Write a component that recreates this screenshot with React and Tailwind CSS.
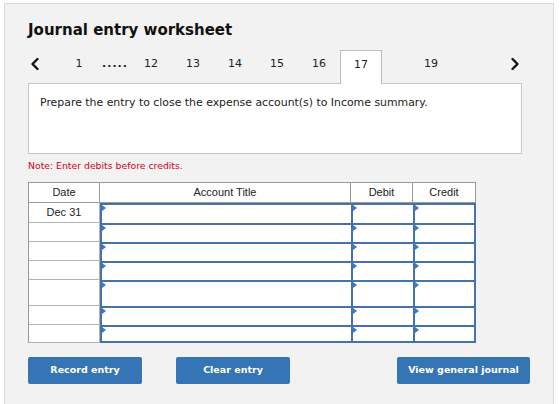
import React from "react";

const V = { fontFamily: '"DejaVu Sans", Verdana, sans-serif' };
const A = { fontFamily: '"Liberation Sans", Arial, sans-serif' };

function Chevron({ dir }) {
  return (
    <svg width="10" height="14" viewBox="0 0 10 14">
      <path
        d={dir === "left" ? "M7.5 2 L2.5 7 L7.5 12" : "M2.5 2 L7.5 7 L2.5 12"}
        fill="none"
        stroke="#111"
        strokeWidth="2.4"
        strokeLinecap="round"
        strokeLinejoin="round"
      />
    </svg>
  );
}

function InputCell({ last, bottom }) {
  return (
    <div
      className={
        "relative bg-white border-t-2 border-l-2 border-[#4572a8] " +
        (last ? "border-r-2 " : "") +
        (bottom ? "border-b-2" : "")
      }
    >
      <div className="absolute top-0 left-0 w-0 h-0 border-t-[3px] border-b-[3px] border-l-[4px] border-t-transparent border-b-transparent border-l-[#3a78c8]" />
    </div>
  );
}

const rows = [
  { h: "h-[20px]", date: "Dec 31" },
  { h: "h-[19px]", date: "" },
  { h: "h-[19px]", date: "" },
  { h: "h-[19px]", date: "" },
  { h: "h-[26px]", date: "" },
  { h: "h-[19px]", date: "" },
  { h: "h-[18px]", date: "" },
];

export default function App() {
  return (
    <div className="w-[560px] h-[404px] bg-white overflow-hidden">
      <div className="ml-[4px] mt-[3px] w-[550px] h-[420px] border border-[#d9d9d9] bg-[#f2f2f2] pl-[23px] pt-[16px]">
        <h1 className="text-[15px] font-bold text-[#111] leading-[20px]" style={V}>
          Journal entry worksheet
        </h1>
        <div className="mt-[10px] flex items-stretch h-[33px] text-[11px] text-[#222]" style={V}>
          <div className="w-[20px] flex items-center pl-[2px] pb-[6px]">
            <Chevron dir="left" />
          </div>
          <div className="w-[10px]" />
          <div className="w-[42px] flex items-center justify-center pb-[5px]">1</div>
          <div className="w-[30px] flex items-center justify-center font-bold tracking-[1px] pb-[5px]">.....</div>
          <div className="w-[42px] flex items-center justify-center pb-[5px]">12</div>
          <div className="w-[42px] flex items-center justify-center pb-[5px]">13</div>
          <div className="w-[42px] flex items-center justify-center pb-[5px]">14</div>
          <div className="w-[42px] flex items-center justify-center pb-[5px]">15</div>
          <div className="w-[42px] flex items-center justify-center pb-[5px]">16</div>
          <div className="w-[42px] flex items-center justify-center pb-[5px] bg-white border border-b-0 border-[#bdbdbd] relative z-10 -mb-px">
            17
          </div>
          <div className="w-[98px] flex items-center justify-center pb-[5px]">19</div>
          <div className="w-[40px] flex items-center justify-end pb-[6px]">
            <Chevron dir="right" />
          </div>
        </div>
        <div className="w-[494px] h-[71px] bg-white border border-[#c6c6c6] pl-[11px] pt-[12px]">
          <p className="text-[10.9px] text-[#222] leading-[14px]" style={V}>
            Prepare the entry to close the expense account(s) to Income summary.
          </p>
        </div>
        <p className="mt-[6px] text-[9.3px] text-[#d0021b] leading-[12px]" style={V}>
          Note: Enter debits before credits.
        </p>
        <div className="mt-[10px] w-[448px] border-t border-l border-[#9a9a9a] bg-white" style={A}>
          <div className="grid grid-cols-[71px_251px_62px_63px] h-[20px] text-[11px] text-[#222]">
            <div className="border-r border-b border-[#9a9a9a] flex items-center justify-center">Date</div>
            <div className="border-r border-b border-[#9a9a9a] flex items-center justify-center">Account Title</div>
            <div className="border-r border-b border-[#9a9a9a] flex items-center justify-center">Debit</div>
            <div className="border-r border-b border-[#9a9a9a] flex items-center justify-center">Credit</div>
          </div>
          {rows.map((r, i) => {
            const bottom = i === rows.length - 1;
            return (
              <div key={i} className={"grid grid-cols-[71px_251px_62px_63px] text-[11px] text-[#222] " + r.h}>
                <div className="border-r border-b border-[#b3b3b3] flex items-center justify-center">{r.date}</div>
                <InputCell bottom={bottom} />
                <InputCell bottom={bottom} />
                <InputCell last bottom={bottom} />
              </div>
            );
          })}
        </div>
        <div className="mt-[14px] flex text-[9.5px] font-bold text-white" style={V}>
          <button className="w-[114px] h-[27px] bg-[#3574b5] rounded-[2px]">Record entry</button>
          <button className="ml-[34px] w-[114px] h-[27px] bg-[#3574b5] rounded-[2px]">Clear entry</button>
          <button className="ml-[107px] w-[133px] h-[27px] bg-[#3574b5] rounded-[2px]">View general journal</button>
        </div>
      </div>
    </div>
  );
}
